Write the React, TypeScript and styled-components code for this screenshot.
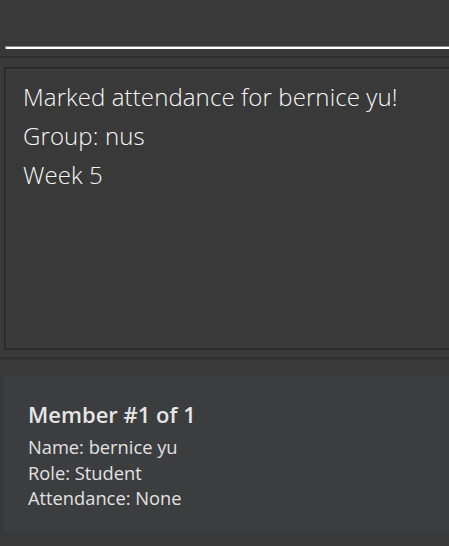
import React from "react";
import styled, { createGlobalStyle } from "styled-components";

const Global = createGlobalStyle`
  html, body { margin: 0; padding: 0; background: #393939; }
  body { width: 449px; height: 546px; overflow: hidden; font-family: "Open Sans", "Segoe UI", sans-serif; }
`;

const Page = styled.div`
  display: flex;
  flex-direction: column;
  width: 449px;
  height: 546px;
  background: #393939;
`;

const CommandBar = styled.div`
  height: 56px;
  padding: 0 0 0 5px;
  display: flex;
  align-items: flex-end;
  box-sizing: border-box;
  padding-bottom: 7px;
`;

const CommandInput = styled.div`
  flex: 1;
  height: 2px;
  background: #ffffff;
  border-top: 1px solid #8a8a8a;
  border-left: 1px solid #8a8a8a;
`;

const Divider = styled.div`
  height: 4px;
  background: #333333;
  border-top: 1px solid #2e2e2e;
  border-bottom: 1px solid #3d3d3d;
  box-sizing: border-box;
`;

const ResultArea = styled.div`
  padding: 7px 0 7px 4px;
`;

const ResultBox = styled.div`
  height: 283px;
  box-sizing: border-box;
  border: 2px solid #2b2b2b;
  border-right: none;
  box-shadow: inset 1px 1px 0 #404040;
  padding: 8px 0 0 17px;
  color: #f7f7f7;
  font-family: "Open Sans", sans-serif;
  font-weight: 300;
  font-size: 24px;
  line-height: 39px;
  letter-spacing: 0.1px;
`;

const ResultLine = styled.div``;

const ListArea = styled.div`
  padding: 15px 0 0 4px;
`;

const Card = styled.div`
  background: #3c3d3f;
  height: 157px;
  box-sizing: border-box;
  padding: 23px 0 0 24px;
  font-family: "Open Sans", sans-serif;
`;

const CardTitle = styled.div`
  color: #e6e6e6;
  font-weight: 600;
  font-size: 22px;
  line-height: 30px;
  margin-bottom: 5px;
`;

const CardField = styled.div`
  color: #e2e2e2;
  font-size: 18.3px;
  line-height: 25.5px;
`;

export default function App() {
  return (
    <>
      <Global />
      <Page>
        <CommandBar>
          <CommandInput />
        </CommandBar>
        <Divider />
        <ResultArea>
          <ResultBox>
            <ResultLine>Marked attendance for bernice yu!</ResultLine>
            <ResultLine>Group: nus</ResultLine>
            <ResultLine>Week 5</ResultLine>
          </ResultBox>
        </ResultArea>
        <Divider />
        <ListArea>
          <Card>
            <CardTitle>Member #1 of 1</CardTitle>
            <CardField>Name: bernice yu</CardField>
            <CardField>Role: Student</CardField>
            <CardField>Attendance: None</CardField>
          </Card>
        </ListArea>
      </Page>
    </>
  );
}
